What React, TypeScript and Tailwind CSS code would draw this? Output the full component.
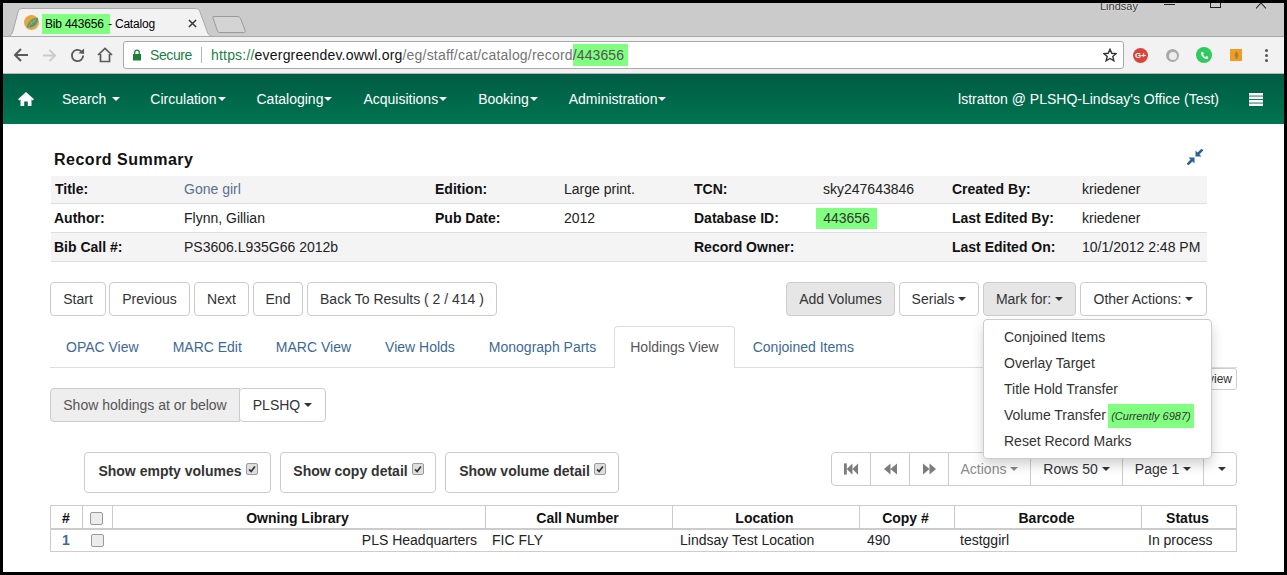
import React from "react";

const Caret = ({ c = "border-t-current" }: { c?: string }) => (
  <span className={`inline-block w-0 h-0 ml-[4px] align-middle border-x-[4px] border-x-transparent border-t-[4px] ${c}`} />
);

const Btn = ({ children, className = "" }: { children: React.ReactNode; className?: string }) => (
  <div className={`h-[34px] flex items-center justify-center border border-[#cccccc] rounded-[4px] text-[#333333] ${className}`}>{children}</div>
);

const Chk = ({ checked = false }: { checked?: boolean }) => (
  <span className={`inline-flex items-center justify-center rounded-[2px] border border-[#9a9a9a] shrink-0 ${checked ? "w-[12px] h-[12px] bg-[#dedede]" : "w-[13px] h-[13px] bg-[#ececec]"}`}>
    {checked && (
      <svg viewBox="0 0 12 12" className="w-[10px] h-[10px]">
        <path d="M2.5 6.5 L5 9 L9.5 3" fill="none" stroke="#333" strokeWidth="2" />
      </svg>
    )}
  </span>
);

const navItems: [string, boolean][] = [
  ["Search", true],
  ["Circulation", false],
  ["Cataloging", false],
  ["Acquisitions", false],
  ["Booking", false],
  ["Administration", false],
];

const summary = [
  ["Title:", "Gone girl", "Edition:", "Large print.", "TCN:", "sky247643846", "Created By:", "kriedener"],
  ["Author:", "Flynn, Gillian", "Pub Date:", "2012", "Database ID:", "443656", "Last Edited By:", "kriedener"],
  ["Bib Call #:", "PS3606.L935G66 2012b", "", "", "Record Owner:", "", "Last Edited On:", "10/1/2012 2:48 PM"],
];

const Panel = ({ label, w, mr }: { label: string; w: string; mr: string }) => (
  <div className={`h-[41px] flex items-center justify-center gap-[4px] pl-[1px] pb-[2px] border border-[#cccccc] rounded-[4px] font-bold text-[#333333] ${w} ${mr}`}>
    <span>{label}</span>
    <span className="-mt-[5px] flex"><Chk checked /></span>
  </div>
);

const cols = ["w-[32px]", "w-[30px]", "w-[373px]", "w-[187px]", "w-[187px]", "w-[95px]", "w-[187px]", "w-[94px]"];

export default function App() {
  return (
    <div className="w-[1287px] h-[575px] overflow-hidden bg-black pt-[3px] pb-[3px] pl-[3px] pr-[3px] text-[14px] font-['Liberation_Sans',Arial,sans-serif]">
      <div className="h-[569px] bg-white flex flex-col overflow-hidden">
        {/* tab strip */}
        <div className="h-[34px] bg-[#cbcbcb] border-b border-[#a9a9a9] relative flex items-end shrink-0 pl-[20px]">
          <div className="relative w-[180px] h-[29px] -mb-px flex items-center text-[12px] text-black pl-[19px]">
            <svg className="absolute left-[-15px] top-0 w-[205px] h-[29px]" viewBox="0 0 205 29">
              <path d="M0 28.5 C3 28 4 26 5 23 L10 4 C11 1 12 .5 15 .5 L186 .5 C190 .5 191 1 192 4 L199 23 C200 26 201 28 205 28.5 Z" fill="#f2f2f2" stroke="#a9a9a9" />
            </svg>
            <svg className="absolute left-[1px] top-[7px] w-[15px] h-[15px]" viewBox="0 0 14 14">
              <circle cx="7" cy="7" r="7" fill="#e8a63a" />
              <path d="M2.5 11.5 C4 5 8 2.5 13 2.5 C13.5 8 9 13 2.5 11.5 Z" fill="#4f9a7a" />
              <path d="M4 10.5 L11 4 M6 5.5 L7 8.5 M9 4 L9.5 7" stroke="#e8a63a" strokeWidth=".7" />
            </svg>
            <span className="relative bg-[#80ff80] h-[20px] w-[68px] flex items-center pl-[3px] mt-[3px] tracking-[-0.2px] whitespace-nowrap">Bib 443656</span>
            <span className="relative mt-[3px] -ml-[2px] whitespace-nowrap tracking-[-0.2px]">- Catalog</span>
            <span className="absolute left-[165px] top-[11px] flex">
              <svg viewBox="0 0 10 10" className="w-[9px] h-[9px]"><path d="M1 1 L9 9 M9 1 L1 9" stroke="#333" strokeWidth="1.6" /></svg>
            </span>
          </div>
          <svg className="absolute left-[209px] top-[12px] w-[36px] h-[20px]" viewBox="0 0 36 20">
            <path d="M1 1.5 L25 1.5 C27 1.5 28 2 28.5 3.5 L33 15 C33.5 17 33 17.5 31.5 17.5 L8 17.5 C6.5 17.5 6 17 5.5 16 L1 3 Z" fill="#d4d4d4" stroke="#9a9a9a" />
          </svg>
          <span className="absolute left-[1097px] -top-[5px] text-[11px] leading-[16px] text-[#333] [text-shadow:0_0_2px_#fff]">Lindsay</span>
          <span className="absolute left-[1161px] top-[1px] w-[11px] h-px bg-[#222]" />
          <span className="absolute left-[1207px] -top-[4px] w-[11px] h-[9px] border border-[#222]" />
          <svg className="absolute left-[1253px] top-0 w-[10px] h-[6px]" viewBox="0 0 10 6"><path d="M5 0 L0 5.5 M5 0 L10 5.5" stroke="#222" strokeWidth="1.1" fill="none" /></svg>
        </div>

        {/* toolbar */}
        <div className="h-[37px] bg-[#f2f2f2] border-b border-[#b5b5b5] flex items-center shrink-0 relative">
          <svg className="ml-[10px] w-[16px] h-[16px]" viewBox="0 0 16 16"><path d="M15 8 H2 M8 2 L2 8 L8 14" fill="none" stroke="#5a5a5a" strokeWidth="2" /></svg>
          <svg className="ml-[13px] w-[15px] h-[15px]" viewBox="0 0 16 16"><path d="M1 8 H14 M8 2 L14 8 L8 14" fill="none" stroke="#c9c9c9" strokeWidth="2" /></svg>
          <svg className="ml-[13px] w-[15px] h-[15px]" viewBox="0 0 16 16"><path d="M14 8 A6 6 0 1 1 12 3.5" fill="none" stroke="#5a5a5a" strokeWidth="2" /><path d="M9 5.5 L15 6.5 L15 0.5 Z" fill="#5a5a5a" /></svg>
          <svg className="ml-[12px] w-[16px] h-[16px]" viewBox="0 0 16 16"><path d="M1 8 L8 1.5 L15 8 M3.5 7 V14.5 H12.5 V7" fill="none" stroke="#5a5a5a" strokeWidth="1.7" /></svg>
          <div className="ml-[10px] w-[1001px] h-[28px] bg-white border border-[#a9a9a9] rounded-[3px] flex items-center text-[14px] whitespace-nowrap">
            <svg className="ml-[8px] w-[10px] h-[12px] shrink-0" viewBox="0 0 10 12"><rect x="1" y="5" width="8" height="6.5" fill="#1a7f37" /><path d="M2.7 5 V3.5 A2.3 2.3 0 0 1 7.3 3.5 V5" fill="none" stroke="#1a7f37" strokeWidth="1.3" /></svg>
            <span className="ml-[8px] text-[#1a7f48] tracking-[-0.4px]">Secure</span>
            <span className="ml-[9px] w-px h-[16px] bg-[#b5b5b5]" />
            <span className="ml-[9px] text-[#1a7f48] tracking-[0.2px]">https://</span>
            <span className="text-[#111] tracking-[0.2px]">evergreendev.owwl.org</span>
            <span className="text-[#757575] tracking-[0.2px]">/eg/staff/cat/catalog/record</span>
            <span className="bg-[#80ff80] text-[#555] h-[22px] w-[55px] flex items-center tracking-[0.1px]">/443656</span>
            <svg className="ml-auto mr-[6px] w-[14px] h-[14px]" viewBox="0 0 16 16"><path d="M8 1.5 L10 6 L15 6.5 L11.2 9.7 L12.4 14.6 L8 12 L3.6 14.6 L4.8 9.7 L1 6.5 L6 6 Z" fill="none" stroke="#333" strokeWidth="1.6" /></svg>
          </div>
          <span className="absolute left-[1130px] top-[11px] w-[15px] h-[15px] rounded-full bg-[#d9453a] text-white text-[8px] font-bold flex items-center justify-center">G+</span>
          <span className="absolute left-[1163px] top-[12px] w-[13px] h-[13px] rounded-full bg-[#a8a8a8] flex items-center justify-center"><span className="w-[8px] h-[8px] rounded-full bg-[#ececec]" /></span>
          <span className="absolute left-[1193px] top-[10px] w-[16px] h-[16px] rounded-full bg-[#2ecc5f] flex items-center justify-center">
            <svg viewBox="0 0 10 10" className="w-[9px] h-[9px]"><path d="M2 1 L3.5 1 L4.3 3 L3.3 4 C4 5.3 4.8 6 6 6.7 L7 5.7 L9 6.5 L9 8 C9 8.6 8.5 9 8 9 C4.5 9 1 5.5 1 2 C1 1.5 1.5 1 2 1 Z" fill="#fff" /></svg>
          </span>
          <span className="absolute left-[1227px] top-[12px] w-[12px] h-[12px] bg-[#f59a23] flex items-center justify-center">
            <svg viewBox="0 0 8 10" className="w-[7px] h-[9px]"><path d="M4 0 L6 3 L5 3 L7 6 L5 6 L5 9 L3 9 L3 6 L1 6 L3 3 L2 3 Z" fill="#8a8a3a" /></svg>
          </span>
          <span className="absolute left-[1262px] top-[12px] flex flex-col gap-[2px]">
            <span className="w-[3px] h-[3px] rounded-full bg-[#555]" />
            <span className="w-[3px] h-[3px] rounded-full bg-[#555]" />
            <span className="w-[3px] h-[3px] rounded-full bg-[#555]" />
          </span>
        </div>

        {/* navbar */}
        <div className="h-[50px] shrink-0 bg-gradient-to-b from-[#005c43] to-[#007450] flex items-center text-white pl-[15px] pr-[21px]">
          <svg className="w-[16px] h-[14px]" viewBox="0 0 16 14"><path d="M8 0 L16 7.2 L14.6 8.4 L13.5 7.5 V14 H9.8 V9.5 H6.2 V14 H2.5 V7.5 L1.4 8.4 L0 7.2 Z" fill="#fff" /></svg>
          <div className="ml-[28px] flex items-center">
            {navItems.map(([t, sp], i) => (
              <span key={t} className={`flex items-center whitespace-nowrap ${["mr-[30px]", "mr-[31px]", "mr-[31px]", "mr-[31px]", "mr-[31px]", ""][i]}`}>
                {t}{sp ? <span className="w-[5px]" /> : null}
                <span className="w-0 h-0 ml-[1px] border-x-[4px] border-x-transparent border-t-[4px] border-t-white" />
              </span>
            ))}
          </div>
          <span className="ml-auto whitespace-nowrap">lstratton @ PLSHQ-Lindsay's Office (Test)</span>
          <svg className="ml-[30px] w-[14px] h-[13px]" viewBox="0 0 14 13"><rect width="14" height="2.6" fill="#fff" /><rect y="3.5" width="14" height="2.6" fill="#fff" /><rect y="7" width="14" height="2.6" fill="#fff" /><rect y="10.5" width="14" height="2.5" fill="#fff" /></svg>
        </div>

        {/* page */}
        <div className="relative flex-1 pl-[47px] pr-[47px]">
          {/* heading */}
          <div className="h-[52px] pl-[4px] pr-[4px] flex items-center justify-between w-[1157px]">
            <span className="font-bold text-[16px] text-[#111] tracking-[0.5px] mt-[19px]">Record Summary</span>
            <svg className="w-[16px] h-[16px] mt-[14px]" viewBox="0 0 16 16">
              <path d="M15.5 0.5 L11 5" stroke="#2a6496" strokeWidth="2.6" fill="none" />
              <path d="M8.5 1.5 L8.5 7.5 L14.5 7.5 Z" fill="#2a6496" />
              <path d="M0.5 15.5 L5 11" stroke="#2a6496" strokeWidth="2.6" fill="none" />
              <path d="M1.5 8.5 L7.5 8.5 L7.5 14.5 Z" fill="#2a6496" />
            </svg>
          </div>
          {/* summary */}
          <div className="w-[1156px] ml-[1px] text-[#111]">
            {summary.map((r, i) => (
              <div key={i} className={`grid grid-cols-[129px_251px_129px_130px_129px_129px_130px_129px] items-center pl-[4px] border-b border-[#dddddd] ${i === 1 ? "h-[29px] bg-white" : i === 0 ? "h-[28px] bg-[#f4f4f4]" : "h-[29px] bg-[#f4f4f4]"}`}>
                {r.map((c, j) => {
                  if (j % 2 === 0) return <span key={j} className={`font-bold whitespace-nowrap ${j === 0 && i > 0 ? "-ml-[1px]" : ""}`}>{c}</span>;
                  if (i === 1 && j === 5)
                    return <span key={j} className="bg-[#80ff80] w-[61px] h-[21px] -ml-[7px] flex items-center justify-center text-[#333]">{c}</span>;
                  return <span key={j} className={`whitespace-nowrap ${i === 0 && j === 1 ? "text-[#5a6f8f]" : "text-[#222]"}`}>{c}</span>;
                })}
              </div>
            ))}
          </div>

          {/* action buttons */}
          <div className="mt-[20px] flex w-[1157px]">
            <Btn className="w-[56px] ml-0">Start</Btn>
            <Btn className="w-[81px] ml-[3px]">Previous</Btn>
            <Btn className="w-[55px] ml-[4px]">Next</Btn>
            <Btn className="w-[50px] ml-[4px]">End</Btn>
            <Btn className="w-[190px] ml-[4px]">Back To Results ( 2 / 414 )</Btn>
            <Btn className="w-[109px] ml-auto bg-[#e6e6e6] border-[#adadad]">Add Volumes</Btn>
            <Btn className="w-[80px] ml-[4px]">Serials<Caret /></Btn>
            <Btn className="w-[93px] ml-[4px] bg-[#e6e6e6] border-[#8c8c8c]">Mark for:<Caret /></Btn>
            <Btn className="w-[127px] ml-[4px]">Other Actions:<Caret /></Btn>
          </div>

          {/* tabs */}
          <div className="mt-[10px] h-[42px] w-[1187px] border-b border-[#dddddd] flex text-[#3d6a92]">
            {["OPAC View", "MARC Edit", "MARC View", "View Holds", "Monograph Parts"].map((t) => (
              <span key={t} className="px-[16px] pt-[2px] mr-[2px] flex items-center whitespace-nowrap">{t}</span>
            ))}
            <span className="px-[15px] mr-[2px] h-[42px] flex items-center whitespace-nowrap bg-white border border-b-0 border-[#dddddd] rounded-t-[4px] text-[#555555]">Holdings View</span>
            <span className="px-[16px] pt-[2px] flex items-center whitespace-nowrap">Conjoined Items</span>
          </div>

          {/* holdings row */}
          <div className="mt-[20px] flex relative">
            <div className="h-[34px] w-[190px] bg-[#eeeeee] border border-[#cccccc] rounded-l-[4px] flex items-center justify-center text-[#555555]">Show holdings at or below</div>
            <Btn className="w-[87px] -ml-px bg-white">PLSHQ<Caret /></Btn>
          </div>

          {/* checks and pager */}
          <div className="mt-[30px] flex items-start w-[1187px] pl-[34px]">
            <Panel label="Show empty volumes" w="w-[187px]" mr="mr-[9px]" />
            <Panel label="Show copy detail" w="w-[156px]" mr="mr-[9px]" />
            <Panel label="Show volume detail" w="w-[174px]" mr="" />
            <div className="ml-auto h-[34px] flex border border-[#cccccc] rounded-[4px] text-[#333333]">
              <span className="w-[39px] flex items-center justify-center border-r border-[#cccccc]">
                <svg viewBox="0 0 16 12" className="w-[15px] h-[12px]" fill="#7c7c7c"><rect x="0" y="0" width="3" height="12" /><path d="M9 0 V12 L3 6 Z M15 0 V12 L9 6 Z" /></svg>
              </span>
              <span className="w-[39px] flex items-center justify-center border-r border-[#cccccc]">
                <svg viewBox="0 0 14 12" className="w-[13px] h-[12px]" fill="#7c7c7c"><path d="M7 0 V12 L0 6 Z M14 0 V12 L7 6 Z" /></svg>
              </span>
              <span className="w-[39px] flex items-center justify-center border-r border-[#cccccc]">
                <svg viewBox="0 0 14 12" className="w-[13px] h-[12px]" fill="#7c7c7c"><path d="M0 0 V12 L7 6 Z M7 0 V12 L14 6 Z" /></svg>
              </span>
              <span className="w-[82px] flex items-center justify-center border-r border-[#cccccc] text-[#8a8a8a]">Actions<Caret /></span>
              <span className="w-[92px] flex items-center justify-center border-r border-[#cccccc]">Rows 50<Caret /></span>
              <span className="w-[81px] flex items-center justify-center border-r border-[#cccccc]">Page 1<Caret /></span>
              <span className="flex-1 w-[32px] flex items-center justify-center"><Caret /></span>
            </div>
          </div>

          {/* table */}
          <div className="mt-[12px] w-[1187px] border border-[#cccccc] text-[#222]">
            <div className="flex h-[24px] border-b-[2px] border-[#cccccc] font-bold text-[#111]">
              {["#", "", "Owning Library", "Call Number", "Location", "Copy #", "Barcode", "Status"].map((h, i) => (
                <div key={i} className={`${cols[i]} flex items-center justify-center pt-[2px] shrink-0 ${i > 0 ? "pr-[3px]" : "pr-[1px]"} ${i < 7 ? "border-r border-[#cccccc]" : ""}`}>
                  {i === 1 ? <Chk /> : h}
                </div>
              ))}
            </div>
            <div className="flex h-[21px] items-center">
              <div className={`${cols[0]} text-center font-bold text-[#3d6a92] pr-[2px]`}>1</div>
              <div className={`${cols[1]} flex justify-center pr-[2px]`}><Chk /></div>
              <div className={`${cols[2]} text-right pr-[9px]`}>PLS Headquarters</div>
              <div className={`${cols[3]} pl-[6px]`}>FIC FLY</div>
              <div className={`${cols[4]} pl-[7px]`}>Lindsay Test Location</div>
              <div className={`${cols[5]} pl-[7px]`}>490</div>
              <div className={`${cols[6]} pl-[5px]`}>testggirl</div>
              <div className={`${cols[7]} pl-[6px]`}>In process</div>
            </div>
          </div>

          {/* partly hidden button */}
          <div className="absolute left-[1177px] top-[244px] w-[57px] h-[22px] border border-[#cccccc] rounded-[3px] text-[12px] text-[#333] flex items-center justify-end pr-[4px]">view</div>

          {/* dropdown */}
          <div className="absolute left-[980px] top-[195px] w-[229px] h-[140px] bg-white border border-[#cccccc] rounded-[4px] shadow-[0_6px_12px_rgba(0,0,0,0.175)] py-[4px] text-[#333333]">
            {["Conjoined Items", "Overlay Target", "Title Hold Transfer"].map((t) => (
              <div key={t} className="h-[26px] pl-[20px] flex items-center">{t}</div>
            ))}
            <div className="h-[26px] pl-[20px] flex items-center">
              Volume Transfer
              <span className="ml-[2px] mt-[2px] bg-[#80ff80] h-[24px] w-[86px] flex items-center justify-center italic text-[11px] text-[#333]">(Currently 6987)</span>
            </div>
            <div className="h-[26px] pl-[20px] flex items-center">Reset Record Marks</div>
          </div>
        </div>
      </div>
    </div>
  );
}
